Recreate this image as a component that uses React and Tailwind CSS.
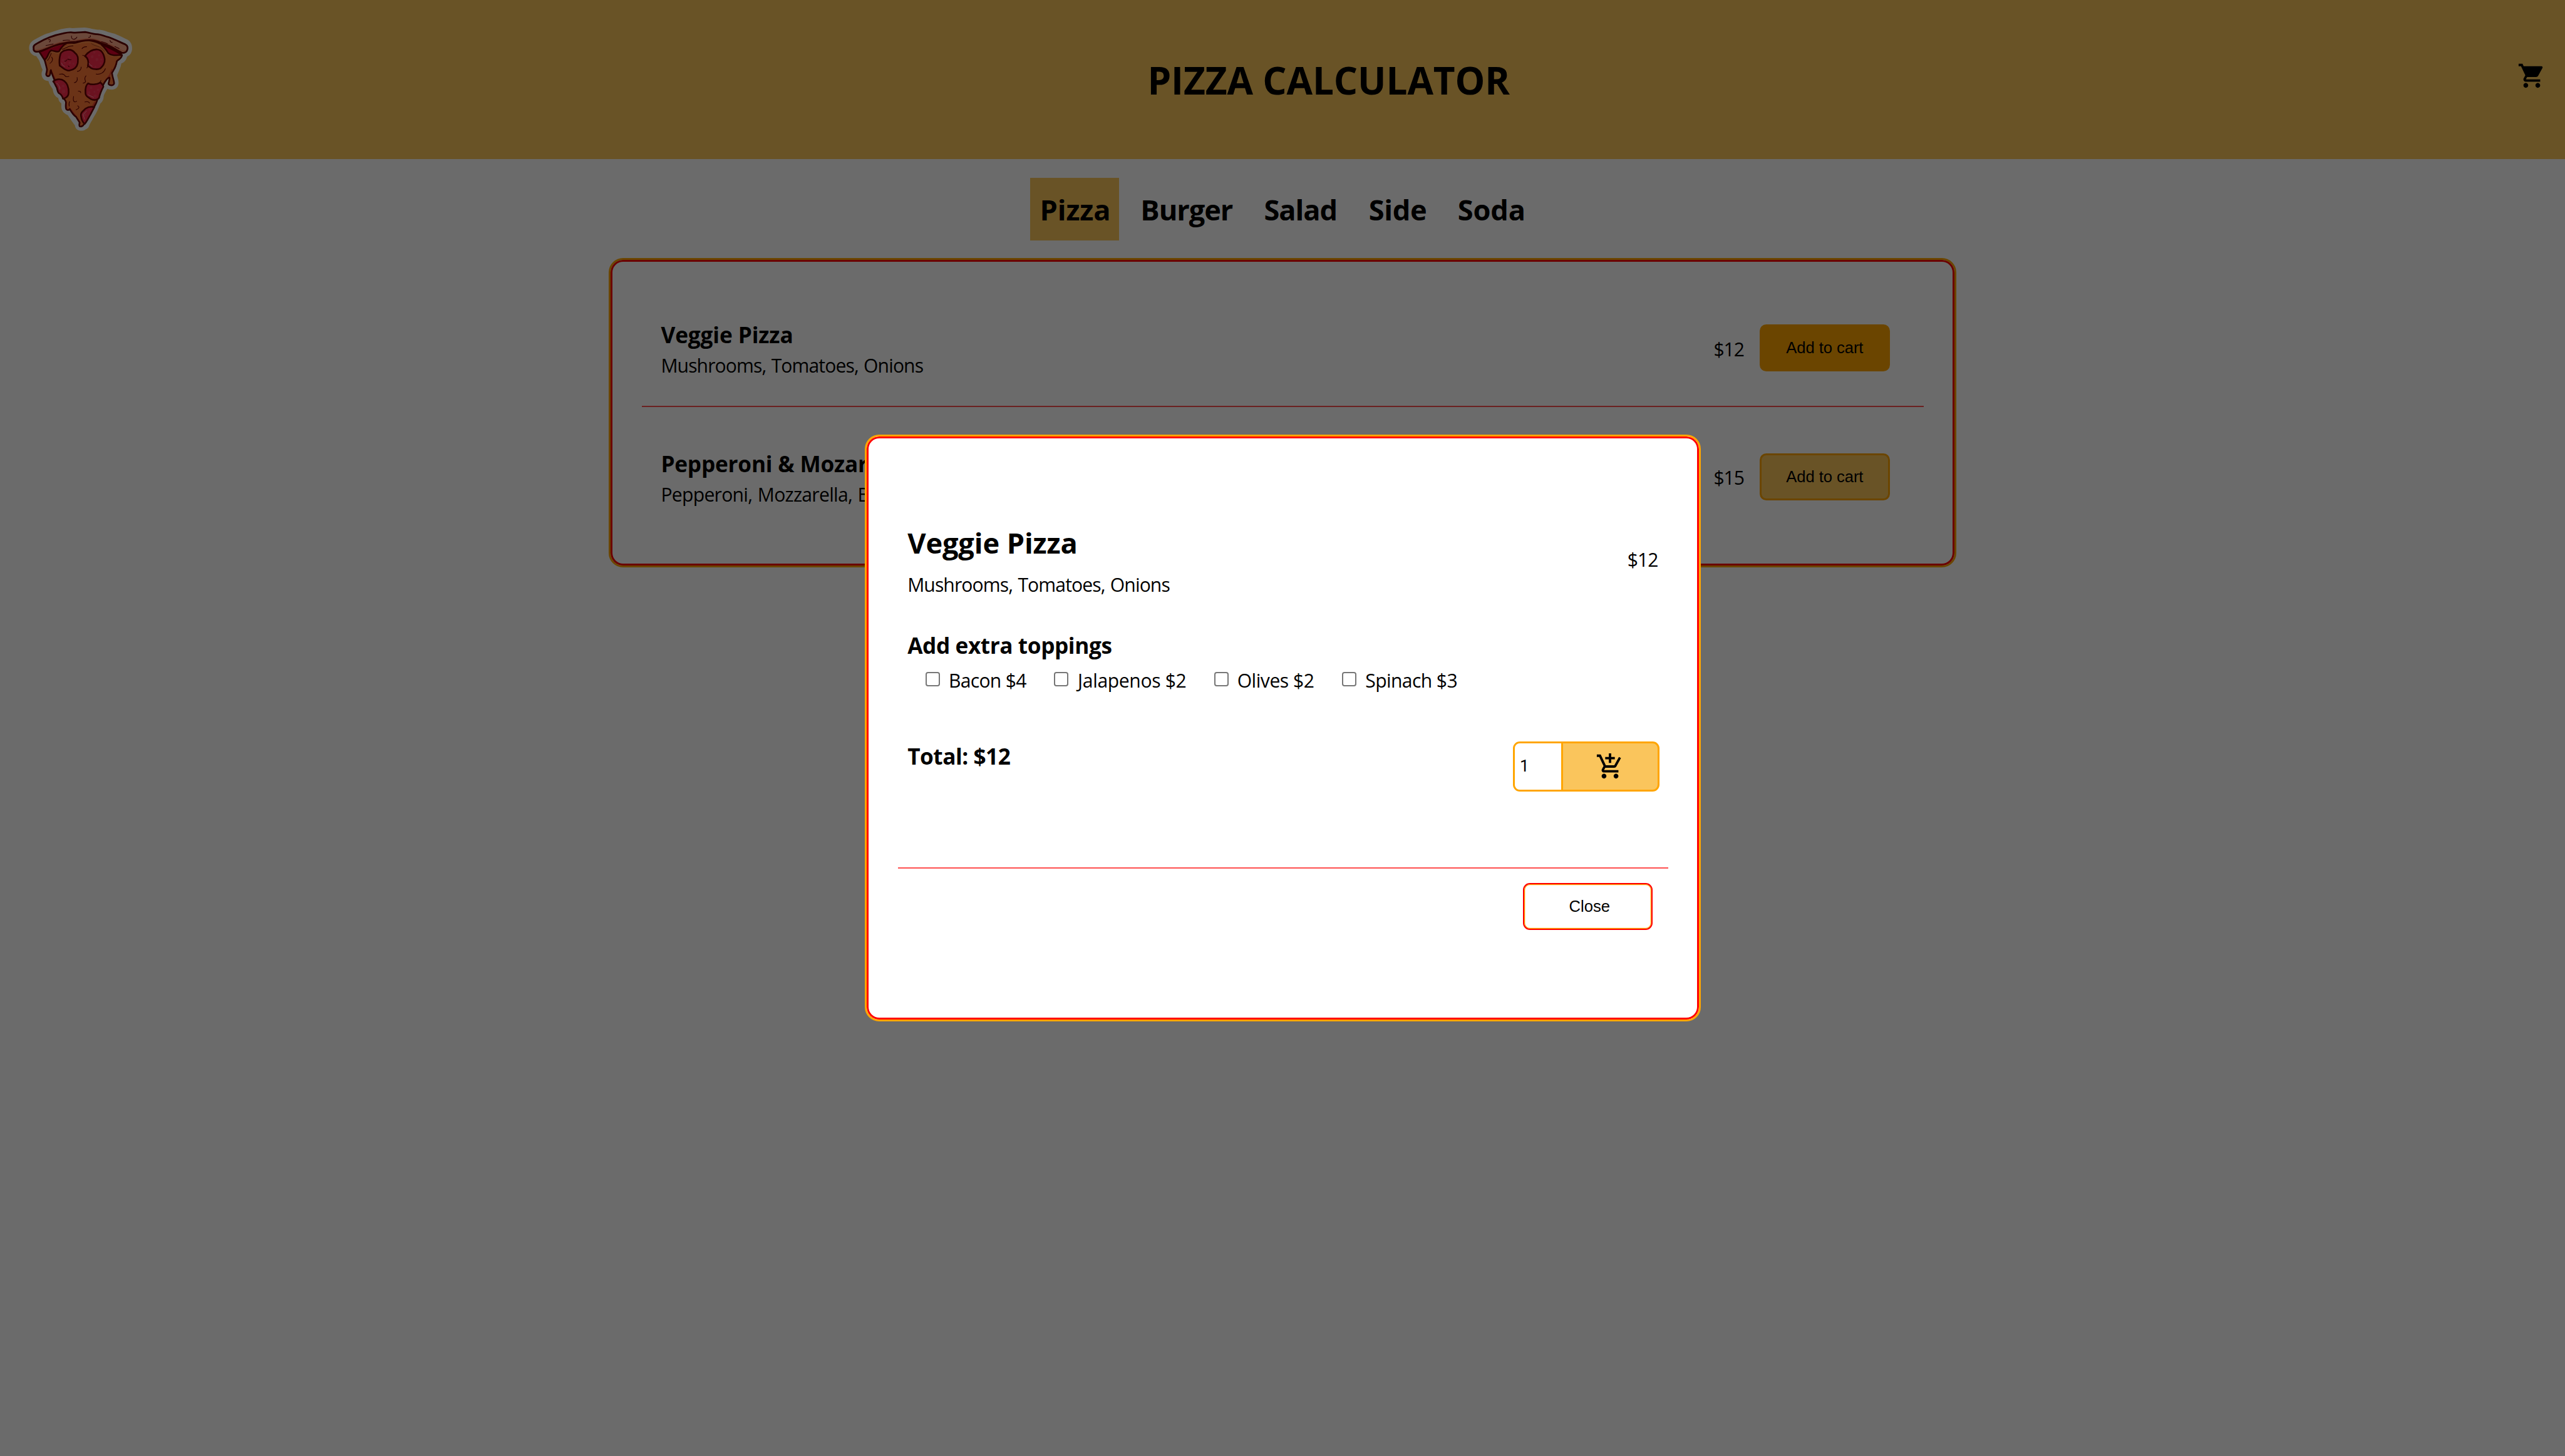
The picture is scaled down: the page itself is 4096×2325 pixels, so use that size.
import { MdShoppingCart, MdOutlineAddShoppingCart } from "react-icons/md";

const tabs = [
  { label: "Pizza", box: "w-[141.2px] mr-[19.6px] bg-[#fac55c]", track: "tracking-[-0.14px]" },
  { label: "Burger", box: "w-[197.2px]", track: "tracking-[-1.06px]" },
  { label: "Salad", box: "w-[167.2px]", track: "tracking-[-1.1px]" },
  { label: "Side", box: "w-[142px]", track: "tracking-[-0.36px]" },
  { label: "Soda", box: "w-[138px]", track: "tracking-[-0.19px]" },
];

const products = [
  { name: "Veggie Pizza", track: "tracking-[-0.11px]", list: "Mushrooms, Tomatoes, Onions", listTrack: "tracking-[-0.88px] [word-spacing:1.3px]", price: "$12", button: "bg-[#ffa500]", row: "border-b-2 border-[#ff5050]" },
  { name: "Pepperoni & Mozarella", track: "tracking-[-0.2px]", list: "Pepperoni, Mozzarella, Bacon", listTrack: "tracking-[-0.7px] [word-spacing:1.3px]", price: "$15", button: "bg-[#fac55c]", row: "" },
];

const toppings = [
  { label: "Bacon $4", box: "w-[205.8px] gap-[14.3px]", track: "tracking-[-0.7px]" },
  { label: "Jalapenos $2", box: "w-[255.4px] gap-[14.6px]", track: "tracking-[-0.35px]" },
  { label: "Olives $2", box: "w-[203.9px] gap-[13.8px]", track: "tracking-[-0.46px]" },
  { label: "Spinach $3", box: "gap-[14.6px]", track: "tracking-[-0.61px]" },
];

function PizzaLogo() {
  return (
    <svg viewBox="0 0 960 960" className="size-[204.8px]" fill="none" strokeLinecap="round" strokeLinejoin="round">
      <path fill="#fff" d="M96 240C95 205 112 186 150 167C185 150 205 135 245 125C290 112 335 90 400 87C430 92 460 84 510 84C550 86 580 100 625 101C660 104 690 122 735 130C775 145 800 160 832 175C858 190 868 215 867 245C864 275 852 292 829 302C824 330 800 350 787 352C782 385 765 415 755 441C757 460 767 475 766 503C762 535 740 550 710 549C700 549 690 547 682 543C672 560 660 578 654 598C655 625 640 645 629 653C615 690 600 725 580 755C565 785 550 805 542 828C535 838 528 842 520 846C510 855 497 857 480 857C458 855 442 842 438 815C425 800 405 770 385 740C365 730 340 715 337 680V652C325 645 316 630 314 612C295 605 275 580 273 545C260 525 247 510 241 485C210 482 190 465 189 430C190 418 195 410 197 400C185 380 180 350 170 328C160 315 155 305 149 298C120 295 98 270 96 240Z" />
      <path fill="#ff7937" d="M170 265L215 330L228 400L222 440L240 452L252 440L258 400L290 480L345 610L368 630L375 690L386 702L400 695L440 745L472 795L475 822L492 824L515 800L600 640L650 520L692 460L690 500L712 516L730 500L716 430L755 340L792 295L720 280L660 222L600 185L560 175L380 190Z" />
      <path fill="#e0002b" d="M172 268L372 200C350 215 340 240 322 265C300 272 280 255 262 258C240 275 240 310 212 325ZM642 215C690 225 740 250 790 285C760 290 720 300 690 272Z" />
      <path stroke="#e62c2c" strokeWidth="10" d="M228 400C230 420 222 436 228 442M262 410L290 470M372 640L376 690M400 690L440 740L478 800M590 640L570 676M652 505L700 440L716 400M738 390L755 335" opacity=".7" />
      <path stroke="#ff9b50" strokeWidth="9" d="M232 318C252 290 240 270 262 268C285 268 300 280 322 276C350 240 380 215 440 207C490 200 530 185 570 195C620 215 650 230 680 280C710 300 740 305 778 298" opacity=".7" />
      <path stroke="#660000" strokeWidth="12" d="M172 265L212 328C220 350 224 375 230 396C232 415 222 425 224 437C228 452 248 452 252 438C256 425 254 405 259 402C262 420 275 450 285 475M350 615C360 620 370 632 372 645C370 665 368 685 374 695C382 705 394 704 400 694C415 720 435 745 447 752C458 770 468 785 474 795C472 805 470 818 474 823C485 828 502 822 505 810M606 628C600 650 590 665 583 678M650 515C665 485 680 460 698 458C704 475 686 498 691 508C702 520 725 520 732 505C735 490 722 465 716 425C730 400 748 375 752 338C765 320 788 320 792 290C760 288 720 302 688 275C675 255 660 230 640 215M212 325C240 310 235 270 262 255C285 258 300 270 320 262C335 235 350 215 375 203" />
      <path fill="#660000" d="M180 262C260 225 330 195 400 182C440 183 470 180 510 172C560 170 620 185 665 215C710 225 750 250 795 280L780 290C740 265 690 240 650 222C620 208 590 190 540 186C490 185 460 205 430 206C400 204 385 205 370 208C310 215 250 240 185 270Z" />
      <path fill="#ffab8a" stroke="#660000" strokeWidth="13" d="M130 238C125 220 140 212 165 198C220 165 290 140 350 128C385 120 400 116 430 122C460 124 490 118 515 118C550 122 570 133 598 134C630 130 660 152 690 156C730 170 780 195 815 210C835 220 838 240 828 258C820 272 800 278 785 270C750 255 730 235 695 220C660 212 620 185 575 178C530 172 490 183 450 190C410 190 370 195 330 205C290 212 230 245 185 258C165 268 135 270 130 250Z" />
      <path stroke="#ff774d" strokeWidth="9" d="M145 252C170 256 200 240 230 230C270 215 310 198 350 192C400 182 440 182 500 172C540 166 580 166 620 182C650 200 700 205 730 225C760 242 790 266 815 260" opacity=".6" />
      <path stroke="#660000" strokeWidth="5" d="M241 175C256 170 260 185 248 192M413 147C412 178 440 180 454 156M554 144C560 156 548 158 541 158M702 179C702 192 712 196 718 195M222 219Q250 212 276 207M350 181Q375 176 400 179M638 190Q665 196 683 206M738 226L770 241" />
      <g fill="#ff2b4c" stroke="#660000" strokeWidth="12">
        <path d="M370 254C400 245 425 255 440 275C462 290 464 310 460 350C455 380 430 400 395 407C360 405 345 380 325 370C320 340 322 310 332 278C342 265 355 256 370 254Z" />
        <path d="M514 298C540 265 570 246 605 248C640 250 655 280 662 320C665 355 645 375 630 390C610 400 580 398 560 388C550 380 540 375 536 372C545 340 535 310 514 298Z" />
        <path d="M276 488C300 468 335 465 360 485C385 505 393 530 392 570C392 595 375 612 350 617C345 600 335 582 318 575C305 560 308 540 300 528C290 515 290 500 276 488Z" />
        <path d="M538 502C560 515 600 512 630 496C640 505 650 515 652 527C640 550 625 585 620 610C610 628 580 632 555 618C540 605 518 600 518 575C516 545 518 515 538 502Z" />
        <path d="M584 680C560 675 535 680 520 690C500 710 480 720 484 745C488 775 498 795 512 806C530 785 540 760 555 735Z" />
      </g>
      <g fill="#ff5a72" opacity=".4">
        <circle cx="395" cy="305" r="9" /><circle cx="352" cy="328" r="12" /><circle cx="400" cy="350" r="9" /><circle cx="385" cy="375" r="7" /><circle cx="428" cy="355" r="8" /><circle cx="362" cy="348" r="8" />
        <circle cx="568" cy="303" r="11" /><circle cx="604" cy="324" r="11" /><circle cx="584" cy="270" r="9" /><circle cx="635" cy="324" r="8" /><circle cx="592" cy="378" r="7" /><circle cx="620" cy="292" r="7" /><circle cx="632" cy="352" r="7" />
        <circle cx="354" cy="562" r="14" /><circle cx="351" cy="522" r="10" /><circle cx="330" cy="535" r="8" /><circle cx="318" cy="497" r="8" />
        <circle cx="560" cy="535" r="10" /><circle cx="544" cy="572" r="11" /><circle cx="590" cy="597" r="11" /><circle cx="612" cy="550" r="9" /><circle cx="584" cy="566" r="7" /><circle cx="516" cy="738" r="10" /><circle cx="548" cy="700" r="6" />
      </g>
      <path stroke="#660000" strokeWidth="5" d="M497 292Q508 294 516 300M536 372Q534 382 528 387M362 335Q375 338 380 325M386 320Q395 328 411 325M388 370Q390 378 397 376M492 243Q502 226 527 228M265 305C276 320 272 340 252 352M262 276C252 300 250 315 234 330M344 247C370 240 385 220 424 222M486 380C486 400 472 412 457 412M667 392C658 420 630 438 598 432M323 434C345 430 355 430 362 442C368 458 380 452 394 450M455 458C460 475 455 495 434 497M522 446C505 465 515 475 519 487C516 498 508 500 500 500M464 560C478 560 484 566 482 572M429 600C425 620 425 640 440 641Q448 640 452 635M514 641C530 635 545 640 548 650M459 670C476 676 470 692 448 700M634 480Q630 492 622 498M400 638Q392 650 396 672" />
      <path stroke="#9a4a20" strokeWidth="4" d="M562 204C585 225 620 220 645 245Q655 252 660 262" />
      <path stroke="#ffb3bd" strokeWidth="4" d="M339 350Q342 370 362 376M544 352Q550 366 568 374M302 500Q325 515 325 546M538 587L578 607M526 710L500 735L511 770" />
    </svg>
  );
}

function ProductRow({ item }) {
  return (
    <div className={"flex h-[205.9px] items-start pr-[54px] pl-[30.7px] " + item.row}>
      <div className="mt-[66.1px] grow">
        <h3 className={"h-[48px] text-[35.2px] leading-[48px] font-bold " + item.track}>{item.name}</h3>
        <p className={"mt-[5.8px] text-[30.1px] leading-[40px] " + item.listTrack}>{item.list}</p>
      </div>
      <span className="mt-[93.5px] w-[73.2px] text-[30.1px] leading-[40px] tracking-[-1px]">{item.price}</span>
      <button className={"mt-[73.6px] h-[75px] w-[208.5px] rounded-[10.5px] border-3 border-[#ffa500] font-['Liberation_Sans',sans-serif] text-[25.6px] tracking-[-0.06px] " + item.button}>
        Add to cart
      </button>
    </div>
  );
}

export default function App() {
  return (
    <div className="h-[2325px] w-[4096px] overflow-hidden bg-white font-['Open_Sans',sans-serif] text-black">
      <header className="flex h-[253.5px] items-start bg-[#fac55c] pr-[29.7px] pl-[25.6px]">
        <div className="mt-[25.6px]"><PizzaLogo /></div>
        <h1 className="mt-[88px] ml-[1602px] text-[60.2px] leading-[80px] font-bold tracking-[-0.11px]">PIZZA CALCULATOR</h1>
        <MdShoppingCart className="mt-[98.1px] ml-auto size-[46px]" />
      </header>

      <nav className="mt-[30.7px] flex pl-[1645.4px]">
        {tabs.map((t) => (
          <div key={t.label} className={"h-[99.8px] pl-[15.2px] text-[45.2px] leading-[102px] font-bold " + t.box + " " + t.track}>{t.label}</div>
        ))}
      </nav>

      <main className="mt-[27.6px] ml-[972.3px] h-[494.8px] w-[2152.2px] rounded-[23px] border-3 border-[#ffa500] px-[49.4px] pt-[29.5px] shadow-[inset_0_0_0_3px_#ff0000]">
        {products.map((p) => <ProductRow key={p.name} item={p} />)}
      </main>

      <div className="fixed inset-0 flex items-center justify-center bg-black/58 pl-px">
        <section className="flex h-[937px] w-[1334.5px] flex-col rounded-[23px] border-3 border-[#ffa500] bg-white pt-[139.9px] shadow-[inset_0_0_0_3px_#ff0000]">
          <div className="flex items-start justify-between pr-[62.9px] pl-[64.9px]">
            <div>
              <h2 className="text-[45.2px] leading-[60px] font-bold tracking-[-0.12px]">Veggie Pizza</h2>
              <p className="mt-[17.1px] text-[30.1px] leading-[40px] tracking-[-0.88px] [word-spacing:1.3px]">Mushrooms, Tomatoes, Onions</p>
            </div>
            <span className="mt-[37.2px] w-[51px] text-[30.1px] leading-[40px] tracking-[-1px]">$12</span>
          </div>

          <h3 className="mt-[52.3px] pl-[64.9px] text-[35.2px] leading-[48px] font-bold tracking-[-0.4px]">Add extra toppings</h3>
          <div className="mt-[13px] flex pl-[93.4px]">
            {toppings.map((t) => (
              <label key={t.label} className={"flex items-start text-[30.1px] leading-[40px] " + t.box + " " + t.track}>
                <input type="checkbox" className="mt-[6px] size-[23px] appearance-none rounded-[4px] border-2 border-[#767676] bg-white" />
                {t.label}
              </label>
            ))}
          </div>

          <div className="mt-[74.6px] flex items-start justify-between pr-[62.9px] pl-[64.9px]">
            <h3 className="mt-px text-[35.2px] leading-[48px] font-bold tracking-[-0.48px]">Total: $12</h3>
            <div className="mt-[2px] flex h-[80px] w-[233.4px] overflow-hidden rounded-[11px] border-3 border-[#ffa500] bg-[#fac55c]">
              <div className="w-[77px] border-r-3 border-[#ffa500] bg-white pl-[7.5px] font-['Roboto',sans-serif] text-[26px] leading-[73px]">1</div>
              <MdOutlineAddShoppingCart className="mt-[14px] ml-[52px] size-[46px]" />
            </div>
          </div>

          <div className="mt-[121.3px] mr-[48.9px] ml-[49.4px] h-[2px] shrink-0 bg-[#ff5050]" />
          <button className="mt-[22.5px] mr-[73.7px] h-[75.4px] w-[207.5px] self-end rounded-[11px] border-2 border-[#ff0000] bg-white pl-[6px] font-['Liberation_Sans',sans-serif] text-[25.6px] shadow-[inset_0_0_0_1.3px_#ffa500]">
            Close
          </button>
        </section>
      </div>
    </div>
  );
}
